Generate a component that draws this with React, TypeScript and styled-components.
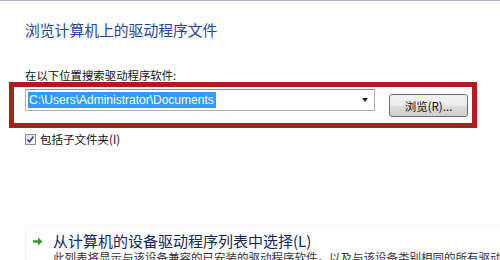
import React from 'react';
import styled, { createGlobalStyle } from 'styled-components';

const GlobalStyle = createGlobalStyle`
  html, body {
    margin: 0;
    padding: 0;
    background: #ffffff;
  }
`;

const CJK = `"Noto Sans CJK SC", "Noto Sans", sans-serif`;
const LATIN = `"Liberation Sans", "Noto Sans CJK SC", sans-serif`;

const Page = styled.div`
  width: 500px;
  height: 260px;
  overflow: hidden;
  background: #ffffff;
  font-family: ${CJK};
`;

const TopEdge = styled.div`
  height: 6px;
  border-top: 1px solid #a9b7c4;
  background: linear-gradient(#f4fbf3, #ffffff);
`;

const Title = styled.h1`
  margin: 14px 0 0 25px;
  font-size: 14.8px;
  line-height: 18px;
  font-weight: normal;
  color: #1f4593;
`;

const SearchLabel = styled.div`
  margin: 30px 0 0 25px;
  font-size: 11.4px;
  line-height: 13px;
  color: #111111;
`;

const Highlight = styled.div`
  margin: 0 0 0 9px;
  width: 468px;
  height: 46px;
  box-sizing: border-box;
  border: 5px solid #a8201e;
  display: flex;
  align-items: flex-start;
  padding: 2px 0 0 11px;
  gap: 14px;
`;

const Combo = styled.div`
  width: 350px;
  height: 22px;
  box-sizing: border-box;
  border: 1px solid #abadb3;
  border-top-color: #8e8f8f;
  background: #ffffff;
  display: flex;
  align-items: center;
  padding: 0 6px 0 2px;
`;

const Selected = styled.span`
  background: #3399ff;
  color: #ffffff;
  font-family: ${LATIN};
  font-size: 12px;
  line-height: 16px;
  padding: 0 2px 0 1px;
`;

const Arrow = styled.span`
  margin-left: auto;
  width: 0;
  height: 0;
  border-left: 3px solid transparent;
  border-right: 3px solid transparent;
  border-top: 4px solid #222222;
`;

const Button = styled.button`
  margin-top: 5px;
  width: 79px;
  height: 23px;
  box-sizing: border-box;
  border: 1px solid #707070;
  border-radius: 3px;
  background: linear-gradient(#f2f2f2 0%, #ebebeb 50%, #dddddd 51%, #cfcfcf 100%);
  font-family: ${CJK};
  font-size: 11.5px;
  color: #111111;
  padding: 0;
`;

const CheckRow = styled.label`
  margin: 4px 0 0 25px;
  display: flex;
  align-items: center;
  gap: 4px;
  font-size: 11.5px;
  line-height: 14px;
  color: #111111;
`;

const Box = styled.span`
  width: 9px;
  height: 9px;
  border: 1px solid #8f8f8f;
  background: linear-gradient(135deg, #dcdcdc, #fbfbfb);
  display: flex;
  align-items: center;
  justify-content: center;
`;

const Option = styled.div`
  margin: 79px 0 0 25px;
  padding: 6px 0 0 7px;
  border-top: 1px solid #f0f2f4;
  border-left: 1px solid #f0f2f4;
  display: grid;
  grid-template-columns: 12px auto;
  column-gap: 8px;
  align-items: center;
`;

const OptionTitle = styled.div`
  font-size: 15px;
  line-height: 18px;
  color: #14265a;
`;

const OptionText = styled.div`
  grid-column: 2;
  font-size: 11.5px;
  line-height: 14px;
  color: #333333;
  white-space: nowrap;
`;

const GreenArrow = () => (
  <svg width="10" height="9" viewBox="0 0 10 9">
    <path d="M0 3.2h5V0.5L9.5 4.5 5 8.5V5.8H0z" fill="#2f9a2b" />
  </svg>
);

const Check = () => (
  <svg width="9" height="9" viewBox="0 0 9 9">
    <path d="M1.5 4.5l2 2.3L7.5 1.5" stroke="#2b3f8c" strokeWidth="1.5" fill="none" />
  </svg>
);

export default function App() {
  return (
    <Page>
      <GlobalStyle />
      <TopEdge />
      <Title>浏览计算机上的驱动程序文件</Title>
      <SearchLabel>在以下位置搜索驱动程序软件:</SearchLabel>
      <Highlight>
        <Combo>
          <Selected>C:\Users\Administrator\Documents</Selected>
          <Arrow />
        </Combo>
        <Button>浏览(R)...</Button>
      </Highlight>
      <CheckRow>
        <Box><Check /></Box>
        包括子文件夹(I)
      </CheckRow>
      <Option>
        <GreenArrow />
        <OptionTitle>从计算机的设备驱动程序列表中选择(L)</OptionTitle>
        <OptionText>此列表将显示与该设备兼容的已安装的驱动程序软件，以及与该设备类别相同的所有驱动程序软件。</OptionText>
      </Option>
    </Page>
  );
}
